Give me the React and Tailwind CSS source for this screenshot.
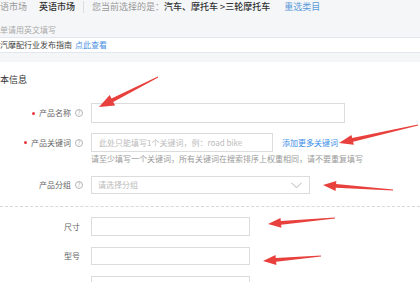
import React from "react";

const arrows = [
  { s: [158, 77], t: [99, 107], h: 15, hw: 6 },
  { s: [418, 125], t: [339, 143], h: 14, hw: 5 },
  { s: [393, 190], t: [323, 185], h: 13, hw: 5 },
  { s: [335, 218], t: [268, 224], h: 13, hw: 5 },
  { s: [321, 256], t: [263, 261], h: 13, hw: 5 },
];

function pts({ s, t, h, hw }) {
  const dx = t[0] - s[0];
  const dy = t[1] - s[1];
  const len = Math.hypot(dx, dy);
  const ux = dx / len;
  const uy = dy / len;
  const nx = -uy;
  const ny = ux;
  const bx = t[0] - ux * h;
  const by = t[1] - uy * h;
  const bw = 1.9;
  const tw = 0.5;
  const p = [
    [s[0] + nx * tw, s[1] + ny * tw],
    [bx + nx * bw, by + ny * bw],
    [bx + nx * hw, by + ny * hw],
    [t[0], t[1]],
    [bx - nx * hw, by - ny * hw],
    [bx - nx * bw, by - ny * bw],
    [s[0] - nx * tw, s[1] - ny * tw],
  ];
  return p.map((q) => q[0].toFixed(1) + "," + q[1].toFixed(1)).join(" ");
}

function Help() {
  return (
    <span className="w-[8px] h-[8px] rounded-full border border-[#b5b5b5] text-[#aaa] text-[6px] leading-none flex items-center justify-center shrink-0">
      ?
    </span>
  );
}

function Label({ req, help, children }) {
  return (
    <div className={"w-[83px] shrink-0 flex items-center justify-end gap-[4px] text-[8px] leading-[10px] text-[#666] " + (help ? "" : "pr-[3px]")}>
      {req && <span className="w-[3px] h-[3px] rounded-full bg-[#e4393c] shrink-0"></span>}
      <span>{children}</span>
      {help && <Help />}
    </div>
  );
}

export default function App() {
  return (
    <div className="w-[420px] h-[282px] overflow-hidden relative bg-white font-['Noto_Sans_CJK_SC','Liberation_Sans',sans-serif]">
      <div className="bg-[#f5f6f8]">
        <div className="h-[14px] flex items-center text-[9px] leading-[10px] whitespace-nowrap">
          <span className="text-[#999]">语市场</span>
          <span className="ml-[12px] text-[#333] font-medium">英语市场</span>
          <span className="ml-[8px] w-px h-[12px] bg-[#dcdcdc]"></span>
          <span className="ml-[8px] text-[#999]">您当前选择的是：</span>
          <span className="text-[#333] font-medium">汽车、摩托车 &gt;三轮摩托车</span>
          <span className="ml-[14px] text-[#5b9bd8]">重选类目</span>
        </div>
        <div className="h-[23px] pt-[11px] text-[8px] leading-[10px] text-[#aaa]">单请用英文填写</div>
        <div className="h-[16px] bg-white border-y border-[#e1e7ef] flex items-center text-[8px] leading-[10px] whitespace-nowrap">
          <span className="text-[#444]">汽摩配行业发布指南</span>
          <span className="ml-[3px] text-[#4a90e2]">点此查看</span>
        </div>
        <div className="h-[9px]"></div>
      </div>

      <div className="mt-[13px] text-[9px] leading-[10px] text-[#333]">本信息</div>

      <div className="mt-[18px] flex items-center gap-[8px]">
        <Label req help>产品名称</Label>
        <div className="w-[254px] h-[20px] border border-[#dcdcdc] bg-white"></div>
      </div>

      <div className="mt-[10px] flex items-center gap-[8px]">
        <Label req help>产品关键词</Label>
        <div className="w-[182px] h-[19px] border border-[#dcdcdc] bg-white flex items-center pl-[7px] text-[8px] leading-[10px] text-[#bbb] whitespace-nowrap">
          此处只能填写1个关键词，例：road bike
        </div>
        <span className="ml-[1px] text-[8px] leading-[10px] text-[#3a8ee6] whitespace-nowrap">添加更多关键词</span>
      </div>
      <div className="mt-[2px] pl-[91px] text-[8px] leading-[10px] text-[#999] whitespace-nowrap">
        请至少填写一个关键词，所有关键词在搜索排序上权重相同，请不要重复填写
      </div>

      <div className="mt-[12px] flex items-center gap-[8px]">
        <Label help>产品分组</Label>
        <div className="w-[219px] h-[18px] border border-[#dcdcdc] bg-white flex items-center justify-between pl-[6px] pr-[7px] text-[8px] leading-[10px] text-[#bbb]">
          <span>请选择分组</span>
          <svg width="11" height="7" viewBox="0 0 11 7">
            <polyline points="0.5,0.8 5.5,5.8 10.5,0.8" fill="none" stroke="#aaa" strokeWidth="0.9" />
          </svg>
        </div>
      </div>

      <div className="mt-[12px] border-t border-dashed border-[#d8d8d8]"></div>

      <div className="mt-[10px] flex items-center gap-[8px]">
        <Label>尺寸</Label>
        <div className="w-[159px] h-[19px] border border-[#dcdcdc] bg-white"></div>
      </div>
      <div className="mt-[11px] flex items-center gap-[8px]">
        <Label>型号</Label>
        <div className="w-[159px] h-[18px] border border-[#dcdcdc] bg-white"></div>
      </div>
      <div className="mt-[11px] flex items-center gap-[8px]">
        <div className="w-[83px] shrink-0"></div>
        <div className="w-[159px] h-[19px] border border-[#dcdcdc] bg-white"></div>
      </div>

      <svg className="absolute left-0 top-0 pointer-events-none" width="420" height="282" viewBox="0 0 420 282">
        {arrows.map((a, i) => (
          <polygon key={i} points={pts(a)} fill="#e8413d" />
        ))}
      </svg>
    </div>
  );
}
